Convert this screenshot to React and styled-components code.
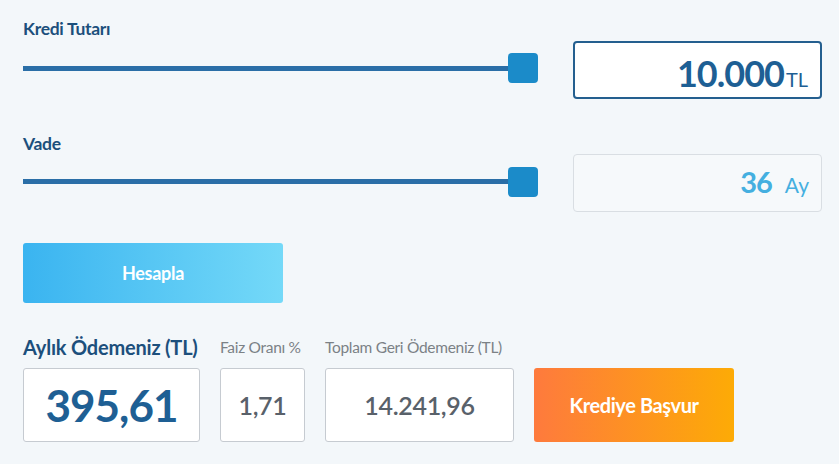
import styled, { createGlobalStyle } from "styled-components";

const GlobalStyle = createGlobalStyle`
  html, body {
    margin: 0;
    padding: 0;
    background: #f3f7fa;
  }
  body {
    font-family: Lato, "Noto Sans", "Liberation Sans", sans-serif;
  }
`;

const Page = styled.div`
  padding: 19px 17px 0 23px;
  width: 839px;
  height: 464px;
  box-sizing: border-box;
`;

const Grid = styled.div`
  display: grid;
  grid-template-columns: 515px 249px;
  column-gap: 35px;
  align-items: center;
`;

const FieldLabel = styled.div`
  grid-column: 1 / -1;
  font-size: 17.5px;
  font-weight: 700;
  line-height: 20px;
  letter-spacing: -0.3px;
  color: #1c4f7c;
  margin-top: ${({ $top }) => $top || 0}px;
`;

const Range = styled.input`
  -webkit-appearance: none;
  appearance: none;
  width: 100%;
  height: 30px;
  margin: 0;
  background: transparent;
  margin-top: ${({ $shift }) => $shift || 0}px;

  &::-webkit-slider-runnable-track {
    height: 5px;
    background: #2a6ea7;
    border-radius: 0;
  }
  &::-webkit-slider-thumb {
    -webkit-appearance: none;
    width: 30px;
    height: 30px;
    margin-top: -12.5px;
    border-radius: 4px;
    background: #1b8bc9;
    border: none;
  }
`;

const ValueBox = styled.div`
  height: 58px;
  box-sizing: border-box;
  display: flex;
  align-items: baseline;
  justify-content: flex-end;
  padding: 12px 12px 0 0;
  border-radius: 4px;
  border: ${({ $active }) => ($active ? "2px solid #245f8f" : "1px solid #d9dee3")};
  background: ${({ $active }) => ($active ? "#ffffff" : "#f6f9fb")};
  color: ${({ $active }) => ($active ? "#1e5f94" : "#44afe0")};
`;

const Amount = styled.span`
  font-size: ${({ $size }) => $size}px;
  font-weight: 700;
  letter-spacing: -1px;
  line-height: 1;
`;

const Unit = styled.span`
  font-size: ${({ $size }) => $size}px;
  font-weight: 400;
  margin-left: ${({ $gap }) => $gap}px;
  line-height: 1;
`;

const CalcButton = styled.button`
  display: block;
  margin-top: 31px;
  width: 260px;
  height: 60px;
  border: none;
  border-radius: 3px;
  background: linear-gradient(90deg, #3ab4f0 0%, #74d9f8 100%);
  color: #ffffff;
  font-family: inherit;
  font-size: 18px;
  font-weight: 700;
  letter-spacing: -0.3px;
  cursor: pointer;
`;

const Results = styled.div`
  display: flex;
  align-items: flex-end;
  gap: 20px;
  margin-top: 32px;
`;

const Stat = styled.div`
  display: flex;
  flex-direction: column;
  width: ${({ $w }) => $w}px;
  flex: none;
`;

const StatLabel = styled.div`
  height: 24px;
  line-height: 24px;
  margin-bottom: 9px;
  white-space: nowrap;
  font-size: ${({ $main }) => ($main ? 20 : 15.5)}px;
  font-weight: ${({ $main }) => ($main ? 700 : 400)};
  color: ${({ $main }) => ($main ? "#1c4f7c" : "#7b8186")};
  letter-spacing: ${({ $main }) => ($main ? "-0.2px" : "-0.3px")};
`;

const StatBox = styled.div`
  height: 74px;
  box-sizing: border-box;
  display: flex;
  align-items: center;
  justify-content: center;
  background: #ffffff;
  border: 1px solid #c6cbd1;
  border-radius: 3px;
  font-size: ${({ $main }) => ($main ? 44 : 25)}px;
  font-weight: ${({ $main }) => ($main ? 700 : 600)};
  color: ${({ $main }) => ($main ? "#1e5f94" : "#59616a")};
  letter-spacing: ${({ $main }) => ($main ? "-1px" : "-0.3px")};
`;

const ApplyButton = styled.button`
  width: 200px;
  height: 74px;
  flex: none;
  border: none;
  border-radius: 3px;
  background: linear-gradient(90deg, #fe7a3d 0%, #fdab06 100%);
  color: #ffffff;
  font-family: inherit;
  font-size: 20px;
  font-weight: 700;
  letter-spacing: -0.4px;
  cursor: pointer;
`;

export default function App() {
  return (
    <>
      <GlobalStyle />
      <Page>
        <Grid>
          <FieldLabel>Kredi Tutarı</FieldLabel>
          <Range type="range" min="1000" max="10000" defaultValue="10000" $shift={-2} />
          <ValueBox $active style={{ marginTop: 2 }}>
            <Amount $size={36}>10.000</Amount>
            <Unit $size={20} $gap={2}>TL</Unit>
          </ValueBox>

          <FieldLabel $top={35}>Vade</FieldLabel>
          <Range type="range" min="3" max="36" defaultValue="36" $shift={-3} />
          <ValueBox>
            <Amount $size={29}>36</Amount>
            <Unit $size={21} $gap={13}>Ay</Unit>
          </ValueBox>
        </Grid>

        <CalcButton>Hesapla</CalcButton>

        <Results>
          <Stat $w={177}>
            <StatLabel $main>Aylık Ödemeniz (TL)</StatLabel>
            <StatBox $main>395,61</StatBox>
          </Stat>
          <Stat $w={85}>
            <StatLabel>Faiz Oranı %</StatLabel>
            <StatBox>1,71</StatBox>
          </Stat>
          <Stat $w={189}>
            <StatLabel>Toplam Geri Ödemeniz (TL)</StatLabel>
            <StatBox>14.241,96</StatBox>
          </Stat>
          <ApplyButton>Krediye Başvur</ApplyButton>
        </Results>
      </Page>
    </>
  );
}
